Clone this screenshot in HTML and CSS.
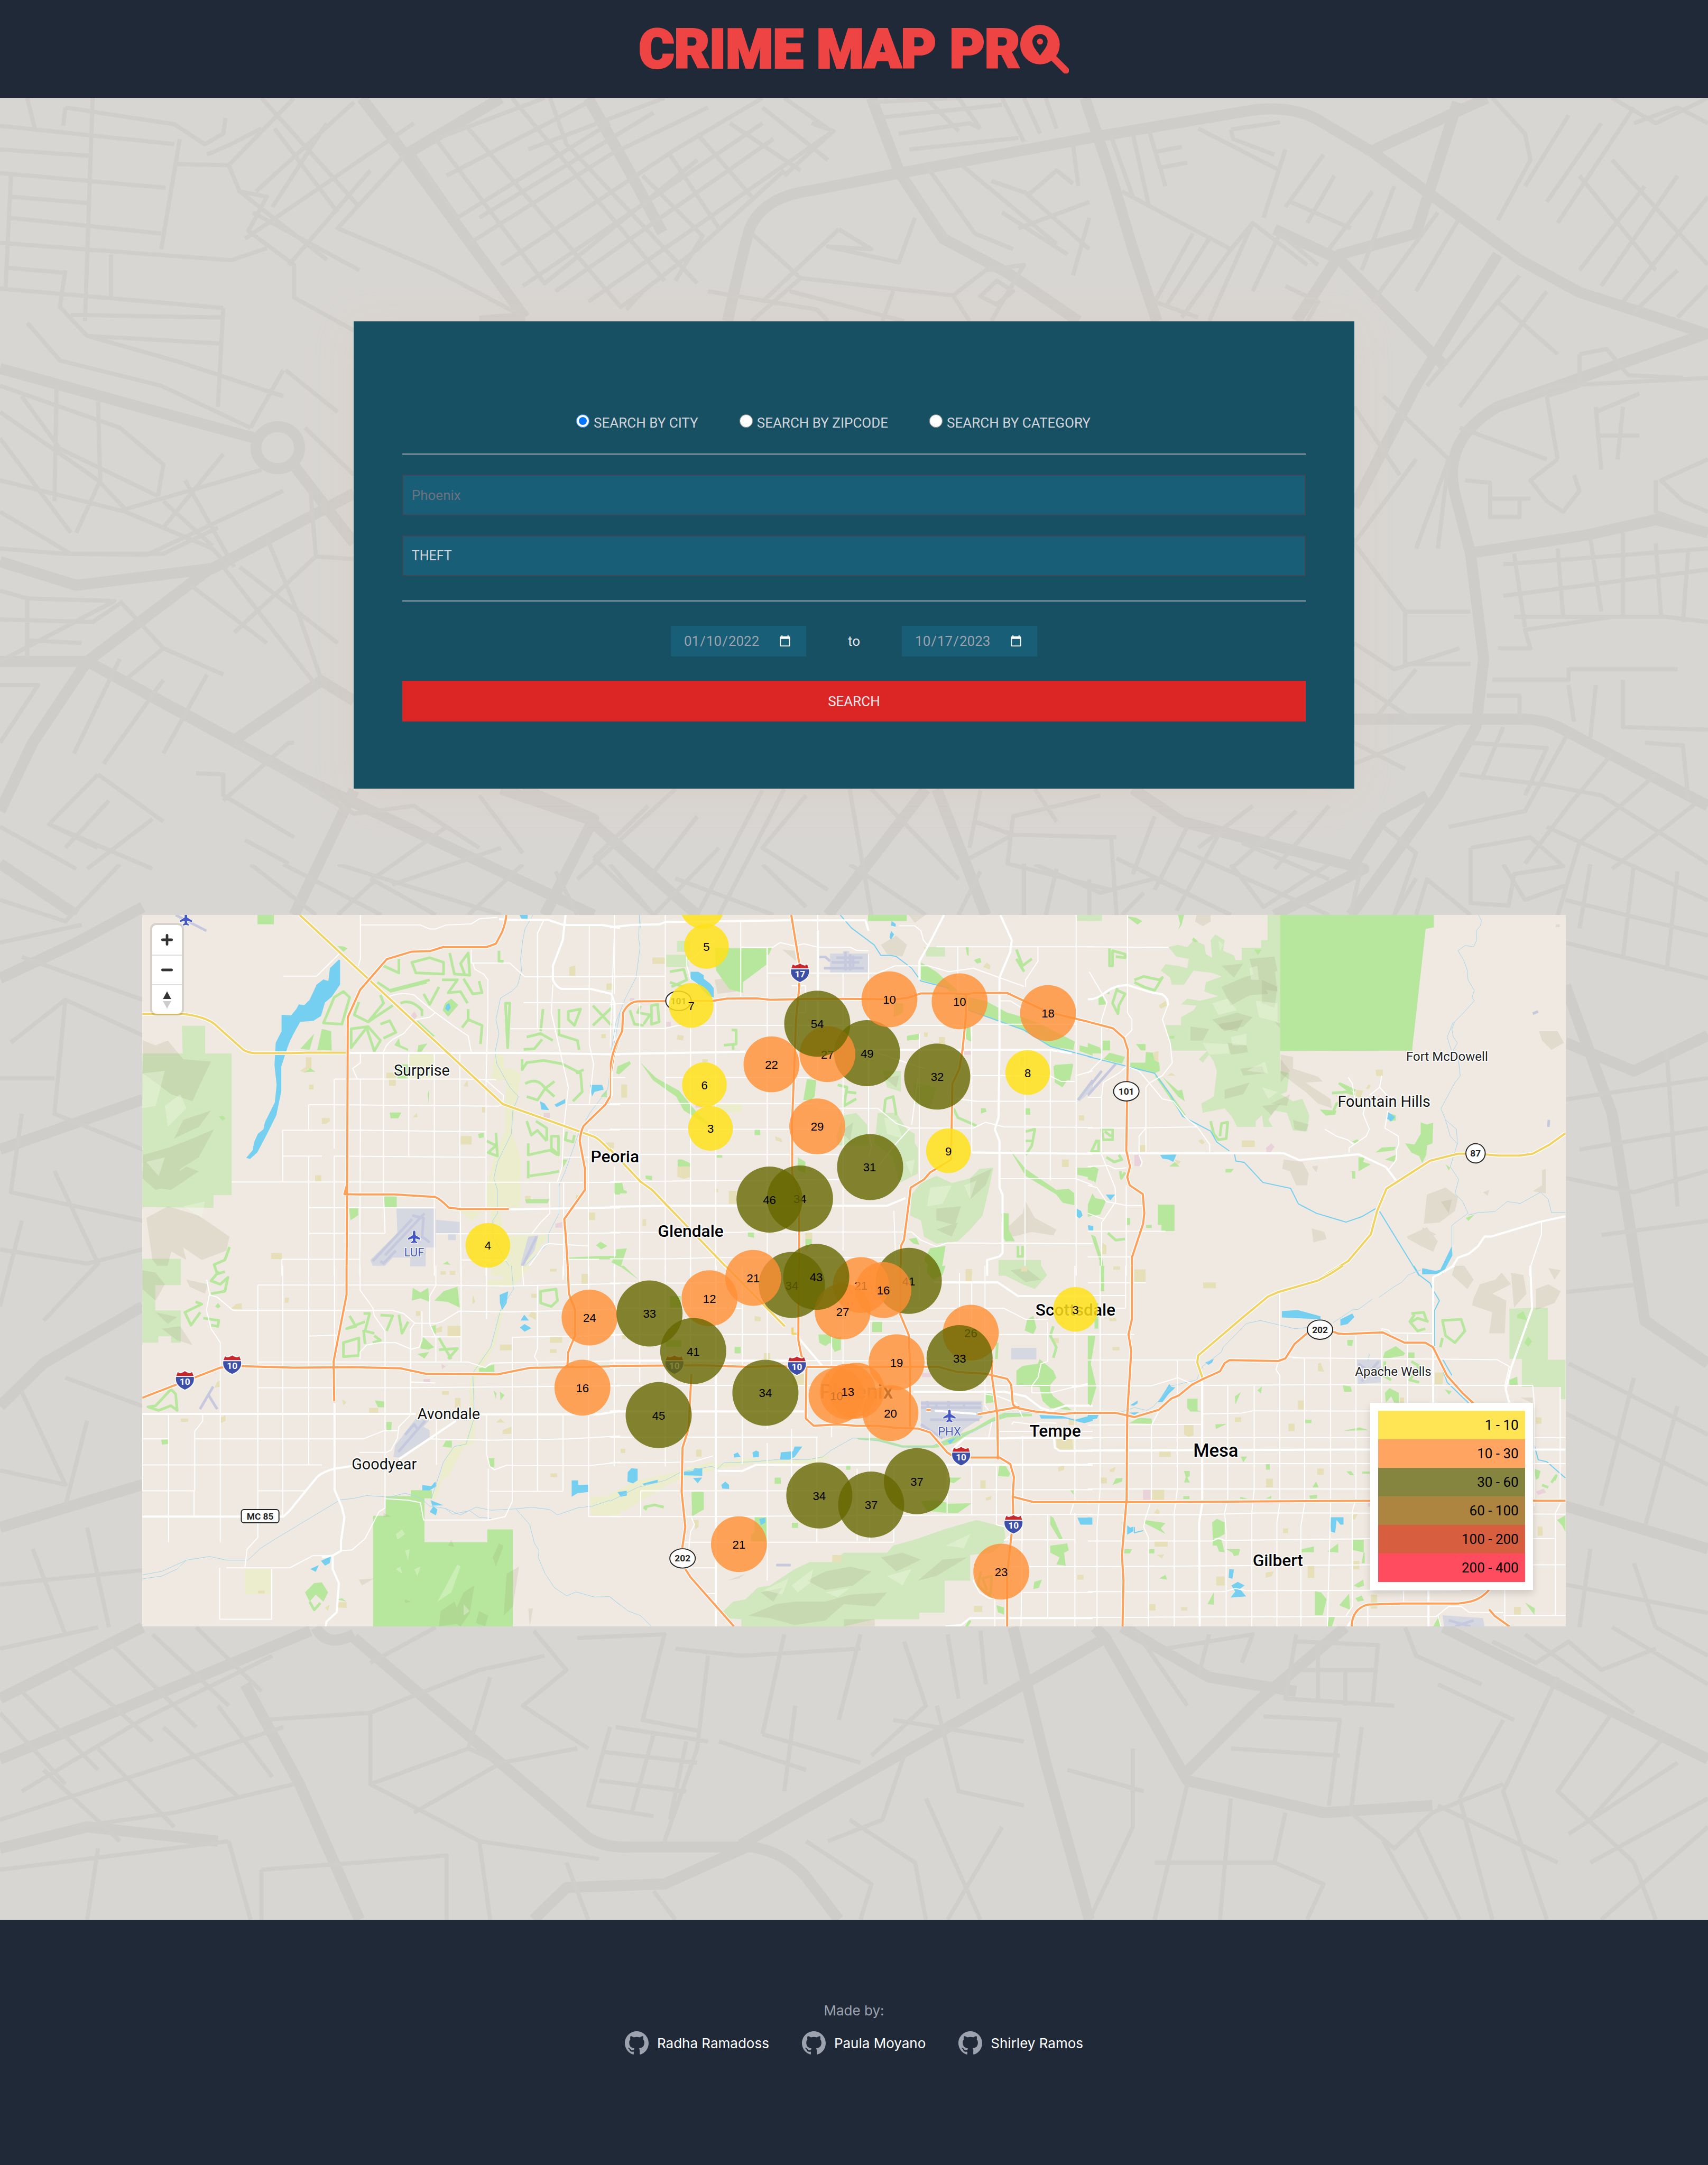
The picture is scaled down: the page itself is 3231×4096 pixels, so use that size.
FILE: index.html
```html
<!DOCTYPE html>
<html lang="en">
<head>
<meta charset="utf-8">
<title>Crime Map Pro</title>
<meta name="viewport" content="width=device-width, initial-scale=1">
<link rel="stylesheet" href="styles.css">
</head>
<body>
<header class="site-header">
  <h1 class="logo">
    <span>CRIME MAP PR</span>
    <svg class="logo-mark" viewBox="0 0 97 97" role="img" aria-label="O">
      <path d="M66 66 91 91" fill="none" stroke="currentColor" stroke-width="13" stroke-linecap="round"/>
      <path fill="currentColor" fill-rule="evenodd" d="M40 1a39 39 0 1 1 0 78a39 39 0 0 1 0-78zM40 19C31 19 25 26 25 34C25 44 34 53 40 62C46 53 55 44 55 34C55 26 49 19 40 19z"/>
      <circle cx="40" cy="34" r="6" fill="currentColor"/>
    </svg>
  </h1>
</header>

<main class="content">
  <svg class="backdrop" viewBox="0 0 3360 3585" preserveAspectRatio="none" aria-hidden="true">
    <svg x="0" y="-12" width="3360" height="1620" viewBox="0 0 1568 1568" preserveAspectRatio="none">
      <path class="ln avenue" d="M332 12 372 120 482 430M372 120 460 12M482 430 440 437M800 12 826 155 866 280 925 345 990 437M668 437Q680 320 688 262Q700 200 745 188L826 155 1000 88 1150 35Q1190 25 1215 60L1260 115 1395 320 1450 382 1568 462M1260 112 1365 12M996 12 1020 160 1040 300 1062 437M1338 20 1300 270 1230 310 1190 437M1170 262 1230 320 1325 520M0 527 110 590 238 662M1375 310 1300 560 1243 790M1568 460 1375 600Q1325 660 1335 760L1350 880 1362 1080 1355 1210 1320 1340 1240 1568M1345 880 1455 845 1520 815 1568 840M0 895 70 940 195 908 325 765M270 712 325 860M195 905 80 1085 215 1235 295 1122 325 1160M0 1085H80L30 1240 0 1370M80 1085 270 1300 545 1568M325 1330 270 1568M460 1328 540 1385 640 1568M1243 1195H1400Q1420 1195 1440 1220L1568 1360M850 1328 760 1568M860 1328 905 1568M1040 1328 1085 1390 1252 1480 1170 1568M0 1470 70 1568M480 1328 545 1385 500 1568M1310 1340 1270 1385 1240 1480M540 12 580 160 608 268"/>
      <ellipse class="ln avenue" cx="255" cy="678" rx="20" ry="40"/>
      <path class="ln lane" d="M25 12 32 70M85 12 78 437M0 65 160 100M0 110 82 122M0 155 152 183M10 200 80 212M8 240 148 270M0 288 212 321 245 298M5 335 60 345M0 375 205 412M165 90 148 300M10 160 5 380M102 310V392M60 30 160 62 188 100 205 80 207 50M160 138 210 140 220 190 245 200 228 265 270 330V392L325 455M60 30 58 65M190 120 212 100 240 70M240 12 300 150 330 220M270 12 210 140M325 20 235 190M300 60 250 220M380 60 225 280M220 190 300 320M340 150 265 330M372 120 310 260 400 340 482 430M252 70 310 230M232 230 330 340M60 340 55 410 80 465 165 515M65 425 203 430M80 465 205 480M25 440 55 512 148 560 230 640M205 412 200 600M165 515 260 580M0 560 110 640 150 710 145 770M0 610 90 740 115 795M0 660 65 840M52 560 50 780M90 590 92 740 70 840M20 580 55 680 145 770M115 795 240 720M0 740 115 800 195 870 210 905M150 780 195 865M0 800 65 880M65 880 150 880 200 830M0 870 60 880 135 882 260 760M170 740 215 905M205 690 150 830M260 530 230 640M262 530 310 610M280 640 325 730M0 950 25 965 105 970 0 1085M25 965V1080M0 1005 85 1010 110 975M25 1045 75 1050M0 1130H35L0 1240M110 970 150 1060 205 1110M150 1060 115 1120M175 940 245 1050M205 905 290 1130M245 850 275 1000 295 1120M285 760 290 885 325 890M290 885 215 1030M220 905 310 1050M110 1080 68 1260M150 1120 95 1280M190 1110 150 1260M90 1300 45 1395 90 1440M45 1395 140 1480M90 1300 150 1390M180 1298 205 1300V1340L270 1420M215 1240 320 1370M225 1425 265 1470M100 1350 60 1440M0 1400 70 1480M140 1385 80 1480M270 1240 265 1240 205 1350M290 1330 325 1375 380 1360 440 1440M345 1495 410 1400M360 1510 460 1440M310 1568 345 1500M440 1340 480 1450M595 1360 545 1460M545 1460 600 1568M640 1380 595 1500M700 1330 640 1568M720 1328 660 1568M740 1340 700 1440 760 1520M780 1328 800 1568M800 1328 880 1500"/>
      <path class="ln lane" d="M400 90 500 365 640 130M380 120 420 240 560 60M430 70 570 410 590 380M470 12 610 360M505 12 520 100 640 365M485 110 610 12M400 90 500 12M410 160 540 20M440 240 600 40M430 290 560 120 650 30M460 330 620 110 700 12M480 370 700 60M510 380 710 90M540 400 765 75M575 415 590 380 640 300 720 150M590 160 645 275 620 360M615 120 660 260M640 80 690 200M670 60 735 150M700 30 760 130M745 60 765 75 720 160M720 12 760 70M800 20 880 12M805 50 920 25M825 80 890 60 900 70M835 110 935 88M850 12 880 75M880 12 900 70M920 12 940 95M940 12 955 80M960 12 970 70M830 160 870 280M850 140 895 270 930 300M880 135 970 290M910 170 945 195 970 150 985 175M985 100 990 180M920 230 980 310M940 190 1000 300M935 260 1000 210M1000 240 985 350M770 262 800 300 760 295 825 325 840 240M770 262 700 400M735 355 875 388 890 437M735 355 690 437M650 380 750 415 760 437M725 380 830 437M820 380 810 437M875 388 905 340 940 330 910 437M690 270 735 355M900 390 915 360 930 380 915 405ZM1030 190 1130 300 1150 250 1200 330M1095 270 1060 400M1110 280 1070 410M1130 300 1085 430M1150 250 1110 437M1185 210 1240 260M1150 380 1175 270 1210 330M1060 400 1100 430M1180 370 1210 400 1200 437M1020 85 1040 200M1040 80 1055 220M1055 75 1070 180M1060 115 1085 105M1065 145 1090 135M1100 70 1175 150M1130 72 1175 58M1130 72 1132 90 1170 120M1180 110 1160 240M1215 120 1180 220M1225 160 1200 250M1260 190 1220 300M1280 180 1250 340M1320 230 1260 400M1340 240 1300 380M1370 12 1400 80 1405 130 1375 245M1440 45 1400 180M1470 60 1420 210M1500 30 1430 250M1480 12 1520 60 1568 12M1500 60 1540 30 1568 60M1450 160 1520 340M1480 130 1568 330M1510 180 1450 340M1540 160 1470 370M1568 200 1490 400M1540 340 1500 420M1568 370 1540 430M1395 350 1310 560M1420 380 1340 600M1375 400 1430 500M1450 500 1475 490 1495 540 1545 545M1450 500V560L1420 580M1370 600 1430 560 1568 545M1420 580 1430 700M1465 600 1470 720M1465 610 1505 575M1465 655 1505 655M1490 600 1485 700M1340 640 1420 700M1345 740 1368 745V810H1395V775M1368 775H1405M1430 700 1405 740 1420 780 1435 800 1450 760 1445 730M1568 700 1525 740 1545 780 1568 800M1520 740V800L1560 830M1270 580 1330 700 1300 870M1243 600 1285 730M1300 700 1243 860M1330 700 1320 870M1243 860 1290 990 1350 990M1290 990 1290 1090 1350 1090M1380 900 1568 870M1380 960 1568 910M1390 1000 1530 1000 1568 1010M1375 1060 1405 1060 1400 1025 1480 1000M1390 880 1400 1020M1430 870 1435 1000M1460 850 1470 990M1490 840 1490 1000M1520 860 1525 1000M1550 870 1545 1010M1370 1120H1440V1100H1540M1365 1150H1395V1195M1440 1130 1445 1200M1465 1130 1460 1230M1490 1120 1490 1210 1568 1215M1510 1240 1545 1245 1550 1350M1243 1050 1280 1100 1340 1060M1243 1120 1300 1200M1300 1100 1260 1200M1243 1280 1340 1200M1243 1240 1290 1290M1350 1240 1420 1250 1400 1340M1380 1210 1360 1310M1340 1300 1420 1320 1470 1340M1440 1220 1400 1370 1330 1400M1480 1260 1440 1360 1400 1470M1520 1300 1450 1430 1430 1568M1560 1350 1480 1480M1470 1340 1568 1470M1420 1400 1568 1540M1350 1440 1405 1420 1435 1475 1390 1490 1385 1550 1350 1545V1440M1270 1400 1300 1450 1280 1568M1300 1568 1310 1500 1350 1568M895 1390 930 1415 1025 1420M930 1415 890 1460M1010 1340 930 1380 925 1470 1020 1520M940 1470V1568M970 1480 960 1568M1000 1500V1568M1020 1420 1025 1568M1025 1460 1130 1568M1060 1380 1040 1490M1090 1400 1060 1520M1120 1410 1080 1560M1150 1360 1100 1440M1190 1370 1130 1480M1220 1360 1170 1480M1140 1430 1220 1500M1080 1440 1220 1568M900 1330 890 1440M950 1328 970 1390M620 1328 530 1500M660 1440 600 1568"/>
    </svg>
    <svg x="0" y="1508" width="3360" height="2200" viewBox="0 0 1568 1568" preserveAspectRatio="none">
      <path class="ln avenue" d="M290 1070Q300 1100 325 1080M285 1075 0 1255M325 1085 540 1365Q555 1380 580 1378H690Q720 1385 740 1420L770 1480M680 1375 1015 1085 1005 1070M1015 1085 1090 1285 1215 1330 1315 1320M930 1070 960 1260 1000 1480M1235 1070 1150 1180 1085 1280M1325 1070 1568 1255M225 1150 275 1290 330 1480M0 1170 131 1070M1030 1070 1110 1140 1190 1160M690 1375 610 1430 520 1435 490 1480M0 1380 80 1350 200 1370M1437 250 1500 290 1568 240M1437 170 1480 350 1510 640 1568 700M1437 900 1568 960M0 160 70 110 131 60M0 400 131 330M131 620 40 700 0 760M0 930 131 870"/>
      <path class="ln lane" d="M0 50 60 80 110 0M0 110 75 85M20 130 131 190M10 250 60 190 131 240M60 190 50 350 131 400M0 300 50 300M20 350 10 460 131 500M50 430 90 560 40 640M0 540 80 560 131 540M20 500 0 620M60 720 131 760M20 740 60 870 0 850M80 780 60 900M0 1010 131 990M30 960 60 1080M80 930 100 1070M0 1100 90 1070M20 1160 90 1270M60 1120 140 1230M100 1090 180 1210M140 1080 210 1180M180 1070 240 1160M0 1190 60 1290M40 1270 110 1370M90 1240 160 1350M150 1210 220 1310M200 1180 250 1280M20 1300 130 1200 250 1110M0 1340 140 1270 260 1210M70 1350 160 1330 270 1290M0 1410 210 1370M90 1380 80 1480M210 1370 230 1480M240 1200 340 1190V1290L440 1370 550 1395M340 1120 400 1070M340 1190 440 1130 500 1110M340 1290 430 1240M380 1330 460 1260M450 1140 430 1240 460 1260 530 1240M530 1085 610 1080 590 1200 640 1215M490 1075 520 1130 480 1180 540 1240M560 1210 540 1320 600 1335M565 1210 650 1230M555 1245 640 1260M550 1285 630 1300M600 1220 580 1330M630 1230 615 1340M650 1110 640 1240 610 1370M620 1100 680 1110 790 1100M720 1080 700 1220M790 1080 770 1200M660 1230 740 1270M700 1220 790 1260M730 1180 720 1300M830 1090 850 1180 800 1250M870 1080 880 1170M900 1075 905 1150M820 1200 940 1230M860 1180 880 1300 940 1320M830 1250 810 1340 760 1370M1040 1070 1090 1180M1070 1100 1150 1080 1140 1120M1110 1080 1100 1140M1190 1080 1180 1170 1280 1180M1190 1090 1265 1095 1260 1180M1210 1090V1170M1235 1130V1180M1195 1130H1265M1290 1070 1300 1110 1360 1150M1160 1195 1230 1200 1220 1320M1130 1240 1230 1250M1250 1210 1240 1330M1040 1240 1040 1350 1000 1480M980 1270 1050 1300M1090 1290 1060 1480M1130 1310 1120 1480M1180 1330 1170 1400 1215 1430 1200 1480M1060 1400 1170 1400M1240 1330 1280 1380 1315 1330 1380 1290M1270 1370 1310 1480M1300 1350 1340 1480M1340 1310 1370 1480M1320 1320 1430 1400M1380 1200 1340 1310M1430 1140 1380 1300 1420 1480M1480 1190 1430 1300 1500 1400M1530 1220 1460 1340M1440 1360 1540 1260M1460 1400 1568 1310M1470 1480 1568 1350M1500 1400 1520 1480M1370 1090 1410 1120 1440 1090 1470 1130 1520 1100M1400 1080 1500 1190M1480 1070 1568 1150M1520 1070 1568 1110M1320 1150 1390 1200M1437 50 1568 100M1437 110 1568 160M1460 0 1450 90M1500 0 1490 130M1540 10 1530 150M1437 330 1568 300M1450 400 1568 370M1437 440 1500 460 1568 430M1470 520 1568 500M1530 260 1540 480M1437 600 1500 590M1440 700 1568 800M1437 770 1568 870M1500 720 1470 900M1540 760 1510 930M1460 960 1450 1070M1500 980 1520 1070M1437 1010 1568 1050M230 0 290 71M260 0 350 71M340 20 400 71M310 0 460 71M480 0 430 71M510 10 530 71M560 0 600 71M620 20 710 71M700 0 740 60M780 0 850 71M900 10 880 71M950 0 1010 40 1060 20 1130 71M1050 40 1030 71M1130 0 1160 60 1220 0M1250 0 1240 71M1300 20 1280 71M1380 0 1400 50 1437 30M240 1410V1480M330 1400 410 1390 410 1480M240 1410 330 1400M440 1370 450 1480M520 1400 540 1480M600 1440 620 1480M780 1340 840 1400 850 1480M740 1370 800 1430 790 1480M850 1310 900 1480M920 1350 870 1480"/>
    </svg>
  </svg>

  <form class="search-card" action="#">
    <div class="mode-row">
      <label class="mode"><input type="radio" name="mode" checked><span>SEARCH BY CITY</span></label>
      <label class="mode"><input type="radio" name="mode"><span>SEARCH BY ZIPCODE</span></label>
      <label class="mode"><input type="radio" name="mode"><span>SEARCH BY CATEGORY</span></label>
    </div>
    <div class="field-group">
      <input class="field" type="text" placeholder="Phoenix" aria-label="City">
      <select class="field" aria-label="Category"><option>THEFT</option></select>
    </div>
    <div class="date-row">
      <input class="date" id="from" type="date" value="2022-01-10" aria-label="From date">
      <label for="until">to</label>
      <input class="date" id="until" type="date" value="2023-10-17" aria-label="To date">
    </div>
    <button class="search-button" type="submit">SEARCH</button>
  </form>

  <section class="map" aria-label="Crime map">
    <svg class="map-art" viewBox="0 0 2800 1400">
      <!-- north west -->
      <svg x="-10" y="-10" width="950" height="720" viewBox="0 0 1568 1568" preserveAspectRatio="none">
        <path class="hill" d="M145 497H221V615H307V1222H248V1277L17 1273V615H148ZM17 1495H142V1568H17z"/>
        <path class="shade" d="M20 560 60 580 100 560 150 640 240 650 200 760 180 820 110 790 60 740 17 700zM90 650 170 730 180 800 90 770zM20 1050 100 1020 180 980 250 940 200 1060 140 1110 120 1180 60 1200 17 1150zM150 900 240 860 200 930 120 980zM30 1320 100 1270 200 1310 300 1400 290 1460 210 1500 120 1420 90 1568 50 1500zM60 1380 140 1400 160 1500 80 1440zM60 1190 160 1100 200 1120 110 1200z"/>
        <path class="glow" d="M20 700 90 690 60 840 17 850zM90 840 140 790 160 850 100 930zM30 1080 90 1060 70 1140zM150 1270 220 1250 210 1320z"/>
        <path class="wash" d="M1160 620H1190V680H1215L1245 700 1230 850 1215 950 1245 1060V1275H1175L1215 1568H1150V1290L1135 1280V1180L1160 1060 1195 950V850L1200 730 1150 728ZM1195 1395H1335L1240 1568H1195ZM882 617H965V725H882ZM1050 1290H1120L1085 1335z"/>
        <path class="sand" d="M548 632h18v50h-12l-8 17-17-10 19-15zM810 697h30v57h-22v-27h-10zM558 749h15v20h-15zM600 892h25v15l-12 10h-13zM1050 969h36v36h-36zM578 1137h20v28h-20zM435 1470h35v26h-35zM1403 245l20-7v45h-20zM1524 315h22v28h-22zM1060 755l12-25 3 28zM895 890l13-20 3 18zM1120 845h10v23h-10zM1467 1297h20v32h-20zM1340 1538h22v12h-22zM1507 532h15v18h-15zM985 1548h17v15h-17zM1260 1226h18v18h-18zM1522 997h26v25h-26zM1424 1222h12v20h-12z"/>
        <path class="pink" d="M888 455 900 435 910 455 900 470zM1320 870h20v22h-20zM1358 1345l22-8v25h-22z"/>
        <path class="park" d="M391 22h53v40h-53zM650 155l20 25 13-15-12-8zM530 595 575 530 560 600zM585 600 600 510 630 520 632 602zM1000 400 1020 380 1043 408 1010 458 992 430zM802 1228h41v46h-41zM688 1278h30v30l-25 22zM820 868h38l-10 25h-25zM845 662h35v62h-35zM1550 1175h18v45h-18zM1383 1070h15l-15 35zM1260 1240h78l-5 17h-70zM1490 1437l15-15 22 18-20 15zM1400 1490l100-7h68v14h-168zM545 695l17-17 17 15zM265 885l15-3 7 12-10 10zM948 770l-5 20 4 40zM912 475l55 65-10 5-55-60zM835 580l15-30 5 30 25 15v10zM910 610l3-30 30-8-20 35zM992 1518l15-12 10 15zM1505 800l20-30v33zM1107 960l18-5v20l-15 3z"/>
        <path class="ln golf" d="M892 225 950 205 995 225V275L905 270ZM1015 185 1030 275 1080 280 1075 185 1050 230 1065 280M800 240 850 270V210M780 310 820 345 950 300M820 350 940 310M640 375 670 350 690 375 665 490 605 485ZM720 395 705 450 750 480 800 400 790 365M750 480 830 410M695 510V590L745 505 770 605 790 560 750 500ZM790 490 820 475 840 525 800 550M855 400Q890 380 925 430V455M990 300H1040L1010 355 1050 350 1073 400M1060 295 1090 360 1120 355 1110 305M930 360 950 405 980 330M1075 425V470L1120 495 1115 575M1075 470 1055 505M1196 400H1210L1203 590ZM1265 545 1310 530 1350 560M1318 425 1310 520M1370 425V535L1430 560 1435 600M1255 598 1290 595 1315 555M1400 435 1440 425 1420 495 1400 470ZM1480 410 1540 495M1540 420 1480 495M1250 640V685L1265 655 1320 645 1380 660 1440 700 1445 780 1415 820M1450 685 1425 700M1260 745Q1300 715 1325 765L1355 735M1325 765 1355 800M1325 765 1300 815 1265 800M1265 905 1280 965 1300 945 1330 990M1295 905 1330 935V990M1345 970H1368V1050L1345 1020ZM1270 1000V1050L1340 1030 1365 1050M1270 1075V1150M1275 1140 1330 1130 1370 1120M1395 950 1390 985 1415 995 1420 965M1165 955 1170 1055 1140 1040 1165 1010 1135 990M300 1445 285 1500 250 1520 260 1560 285 1550M1175 175V220H1190"/>
        <path class="air" d="M842 1280H968V1447H937V1527H887V1490H830L805 1525H765L757 1500 845 1385ZM970 1328 1047 1337V1385H1035V1415H1010V1388H970ZM1270 1400 1303 1395 1290 1460 1250 1530 1245 1520z"/>
        <path class="ln runway" d="M765 1505 893 1325M805 1480 933 1300M1250 1530 1297 1400M125 22 225 90M893 1310 930 1320 925 1400 950 1425M790 1505 800 1515 840 1460"/>
        <path class="water" d="M655 213 659 215V320L632 372 610 397 597 455 572 476 530 480Q500 545 488 590L468 672V778L452 880 420 965 390 1040 367 1067 354 1063 375 1030 380 995 392 960 410 940 415 910 447 825 453 750 446 665 450 570 469 520V450L500 452 517 425 525 405 543 408 560 385 583 320 605 298 621 305 626 250ZM1242 22h26v16h-20zM1005 405l8-5 5 20-8 15-10-12zM1470 750h40l5 20-30 10-8 20zM1308 820l15 10 15 28-25-2zM1355 835l35-25v18l-28 17z"/>
        <path class="ln stream" d="M1285 22 1260 80 1252 130 1245 210 1248 260 1235 325 1215 350 1180 378 1165 470 1175 530 1162 610 1168 660 1210 760 1238 800 1220 860 1215 960 1170 1080 1158 1150 1170 1200V1300L1155 1330V1400L1195 1500 1215 1540V1568M1568 440 1555 530 1540 640 1528 770 1470 870 1430 970 1390 1120 1370 1180V1300L1335 1390V1430L1225 1568"/>
        <path class="ln street" d="M725 22V210L718 240M725 65H920L950 82H968L1003 65 1085 60 1112 38 1170 32M475 284H583L655 190M1085 170V228H1210L1258 286H1568M1090 228 1097 255 1125 275 1139 300V440L1133 730 1190 795 1187 832M1320 45 1300 100V505M1212 509H1568M1255 398H1545M1350 320 1345 440 1400 760 1385 940 1380 1100 1365 1165M1468 70V575L1482 660 1468 835M725 617V655L700 680 715 725M642 725H1050L1165 728M725 725V910L723 1568M800 617V1210L805 1385M882 617V1055M965 617V1568M1048 617V1180L1052 1568M557 835H640L1173 841 1187 832M473 944H730L1133 951M473 1055H600M640 1055 1133 1060M307 1166H680L1568 1168M640 725V1022M473 944V1164M557 835V944M557 1055V1568M640 1055V1568M557 1276H968M557 1386H805M970 1388H1280L1568 1384M470 1497H723M470 1497V1568M1133 730V1568M1385 1170V1568M1340 1170V1300L1310 1340 1280 1390M1052 1500H1200M800 610Q805 580 830 555L865 530 905 470 950 460 968 440Q920 390 900 365 860 350 820 370M968 440 1030 500 1075 540 1085 610M1400 835H1568M1465 943H1568M1385 1060H1470M1465 943V1568M1550 90V360M1550 1100V1568M1250 1568 1320 1440 1335 1430 1465 1440M1385 1497H1500"/>
        <path class="ln main" d="M1175 40 1205 43H1335L1385 65H1510L1568 78M1391 22 1382 130 1350 240V300Q1360 330 1378 339H1473L1540 360 1550 400V560M682 613H1230L1568 619M1207 1283 1568 1275"/>
        <g class="casing"><path class="ln" id="yw1" d="M528 22 705 240 1187 832 1484 972Q1500 980 1545 1045L1568 1075M17 446H150Q220 458 250 488L345 600Q360 612 380 614H500L550 612H682"/></g>
        <use class="route" href="#yw1"/>
        <g class="casing"><path class="ln" id="or1" d="M1199 22Q1196 60 1185 95L1165 145 1133 160H992L950 177 892 179 811 211 724 343 684 460 682 1175 680 1568M682 1175 673 1218 717 1219 835 1219 968 1230Q985 1240 1012 1276L1050 1282H1207M1568 540 1548 620 1538 700V795L1520 835 1450 925Q1440 950 1437 990L1454 1110V1200L1387 1325 1392 1400 1400 1568"/></g>
        <use class="freeway" href="#or1"/>
      </svg>
      <!-- north centre -->
      <svg x="920" y="-10" width="950" height="720" viewBox="0 0 1568 1568" preserveAspectRatio="none">
        <path class="hill" d="M183 192H255V245H183ZM218 133H260V180H218ZM760 880 800 870 835 920 840 1010H740L735 970ZM870 870 930 870 965 940 990 960V1000L1000 1020V1130L940 1170 920 1060 860 1000ZM885 690H945V780L900 760ZM1010 1170 1060 1140 1110 1170 1170 1150 1200 1110 1245 1105 1230 1200 1210 1310 1190 1340 1170 1370 1130 1420 1060 1430 1020 1400 1010 1330 975 1310 980 1220ZM1262 1500H1400V1568H1262ZM1517 22h51v26h-51zM985 740 1060 760 1040 850 990 830zM1020 160h68v40h-60z"/>
        <path class="shade" d="M880 150 930 110 965 150 950 200 900 190zM970 22H1025L990 55zM1340 1300 1350 1250 1380 1320 1450 1370 1440 1395 1370 1380 1310 1400 1280 1375zM1060 1280 1140 1270 1120 1350 1060 1330zM1170 1150 1240 1110 1220 1180 1170 1240zM750 950 790 910 780 990zM560 170 600 175 605 220zM340 300 390 290 410 350 350 360zM890 720 940 710 930 760zM1060 1370 1130 1340 1110 1400z"/>
        <path class="glow" d="M1040 1190 1110 1180 1080 1260 1030 1270zM1150 1180 1190 1160 1170 1240zM890 890 930 900 950 980 900 960zM960 1080 990 1070 980 1140z"/>
        <path class="wash" d="M315 832H427V868H315z"/>
        <path class="sand" d="M138 204h42v28h-42zM37 748h19v57h-19zM219 1100h41v45l-20 8-21-10zM386 1204h25v56h-25zM106 1325h12v30h-12zM536 970l20 10 5 15-22-7zM635 1380h22v55h-22zM220 535l20 5-3 20-20-5zM1212 245l12-20 12 15-3 15zM1158 1540h18v28h-18zM1468 1070h22v32h-22zM1335 630h20v35h-20zM1523 880h17v22h-17zM340 1195h12v15h-12zM1020 525h12v18h-12zM300 640h18v12h-18zM1068 545h20v32h-20z"/>
        <path class="pink" d="M183 480h15v20h-15zM1150 603h22v18h-22zM278 830h22v17h-22zM65 378h14v12h-14z"/>
        <path class="park" d="M838 22H964V48H838ZM340 163 508 165V235L432 310V355L388 340 345 260zM510 163h16l-10 30h-8zM1010 225 1060 265 1150 370 1220 390 1290 440 1330 455 1400 490 1510 565 1505 600 1430 585 1340 515 1160 430 1090 330 1010 300zM1525 580 1568 595V625L1525 605zM20 700 25 670 65 648 68 660 30 705zM100 655 150 720 225 775 290 880 325 915 315 920 240 860 215 800 140 730zM640 725 670 730 665 800 655 815H628zM15 1170h25l5 30 10 5v10h-40zM220 1070h15l25 15v15h-40zM115 1138l22 2v18l-20-5zM20 1455l35-5-20 80-30-20 15-30zM1297 1025 1350 1110 1450 1200 1490 1195 1508 1215V1265L1470 1255 1450 1220 1350 1140zM1518 1105h50v60l-15-20-35-10zM965 540l40-10v25l-40 5zM1350 850h15v28h-17zM448 1380h20v25l-20-5zM470 940h18v25h-18zM347 1050h18v12h-18zM1440 670l60-10v40l-30 60-25-20zM970 1410l25-5 10 30-20-5zM1270 1300h25v70l20 50h-30l-10-20zM1155 160h10v38l-5-5zM1040 1450l50-10-10 80-20 48-40-68zM1182 215l20-10 5 20-15 5zM922 400h30v40l-30 20zM1205 850h15l3 15-18 8zM1150 505h20l3 60-15-10zM610 1060l25 20v50l-25-15zM635 1410h20v20l-20 30z"/>
        <path class="ln golf" d="M195 265 240 255 250 300 200 330M195 310 240 330M395 515H410V575L370 580M400 580V600M65 430 80 490 110 495M100 410 90 440 130 450 110 490M135 410 155 405 160 480 135 490ZM740 750 770 760 760 840 800 810M770 780 800 785M895 810 920 800 930 880M895 810 890 870M1320 170 1340 240 1370 210M1320 210 1345 265M1350 950 1380 940 1370 1010 1350 1050M1350 990H1375M1445 670 1500 665 1490 730M1115 850 1130 890 1190 925M1280 1300 1290 1420M1325 1440V1485H1340V1440"/>
        <path class="air" d="M715 187H757V177H777V187H838V268H715zM1568 725V770L1525 820 1520 810 1540 780z"/>
        <path class="ln runway" d="M695 250H825M720 225H810M735 205H820M765 180V260M780 190V260M790 195V250M680 202H700L715 220M1568 730 1520 815"/>
        <path class="water" d="M915 47l13 13v12l-15-5zM913 90l10 15-10 22-5-10zM262 265h25l18 15v15l20 20 12 20v40l-15-5-20-25-18-30-22-20zM1515 1280l15 10 5 20-10 12-10-10zM1553 1350l15 5v18l-10-5z"/>
        <path class="ln canal" d="M748 22 785 78 858 150 880 195H913L930 200 980 250 1010 305 1100 335M1165 430 1345 515 1430 585 1568 632"/>
        <path class="ln stream" d="M97 22 93 120 98 160 85 290 50 380 20 480 5 600M95 22 101 80"/>
        <path class="ln street" d="M97 285V1568M180 22V1568M262 390V1568M344 390V1568M425 50V380M511 160V1568M675 22V700M757 270V1460M840 190V600M840 740V960M922 1290 930 1568M1005 530V1160M1130 160V360M1175 480V1040M1348 600V1568M1430 600V1160M1514 22V1568M0 285H180M0 405 45 400M0 508H180L220 495H1150M180 718H650M0 718H50M0 830H675M680 850H870L930 915 975 935H1180L1220 910 1280 930 1568 932M0 940H675M0 1048H750M0 1165 750 1155M0 1382H430M430 1380H980L1010 1415 1060 1443 1095 1427 1568 1430M0 1495H200L340 1490H900M510 271H870L925 240H1035L1100 265 1180 250 1265 290 1345 328M1060 158H1568M425 160H530L553 140 600 155 630 145 675 160H780L800 173 840 175M1175 490H1514M1175 710H1350L1430 712 1465 735H1510M1120 808 1190 820H1514M1265 1152H1514L1568 1180M940 68H990L1010 90 1018 130 1035 155M15 22V90L0 590M250 190V240L262 300M255 220 340 130M1390 160V220L1350 300V330M1265 390H1300L1350 430M840 960 850 1010 840 1060M975 935 930 1000 870 1100M980 920 1000 720M590 325H635V440H590M1514 710 1568 690M840 600 930 640 1020 680"/>
        <path class="ln main" d="M0 75 70 65 160 62 180 52 570 45H830L840 90M1085 22 1035 150 1005 220V300M1268 22 1305 130 1300 180 1265 290V600M1265 600 1262 890 1250 940 1265 990V1190L1275 1220V1470L1265 1485 1225 1500V1568M0 618 440 608M790 600H1430L1500 615M0 1272 180 1268H900L960 1235M1175 1040 1568 1045M840 600V740M675 90V500"/>
        <g class="casing"><path class="ln" id="yw2" d="M0 1025 100 1165 137 1200 385 1540 405 1568"/></g>
        <use class="route" href="#yw2"/>
        <g class="casing"><path class="ln" id="or2" d="M0 800V690Q5 620 25 560L40 520 43 440Q60 395 90 392L335 390 380 380 475 379 520 385 680 381 930 383 970 376 1010 358H1120L1160 362 1180 356H1290L1420 437 1568 484M589 22 615 230V330L605 460 592 900V1130L615 1220V1568M1158 362 1155 470 1145 600 1135 680 1112 745 1108 1070 1040 1125 1020 1155 977 1190 955 1415 945 1440V1568"/></g>
        <use class="freeway" href="#or2"/>
      </svg>
      <!-- north east -->
      <svg x="1860" y="-10" width="960" height="720" viewBox="0 0 1568 1568" preserveAspectRatio="none">
        <path class="hill" d="M578 22H618V690L648 700 640 780 620 790 660 820 690 810 712 880 705 950 660 945 640 870 600 860 580 900 595 930H565L560 880 540 905V930H480L465 890 440 850 370 870 365 830 405 800 415 690 405 650 390 620 370 655 357 640 385 603H272L250 494H300V460L340 430 350 410 300 405 320 380 360 390 420 370 375 350 380 310 430 285 400 270 340 260 310 320H270L265 290 235 260 250 233 290 240 320 250 325 210 285 200 260 160 290 150 320 160 340 130 375 150 380 190 400 205 395 130 410 105 440 130 435 175 470 195 475 215H495V162H557V130H578ZM0 22h46v26H0z"/>
        <path class="shade" d="M350 22H395V50L370 70 345 50zM430 330 500 290 600 250 610 350 560 340 500 380 460 410zM400 470 480 440 530 460 500 500 440 520zM520 210 600 200 610 260 540 310zM330 500 390 510 370 560 330 560zM450 570 510 580 515 610 460 620zM620 620 660 630 660 680 740 715 755 735 700 740 780 810 785 850 740 830 700 780 620 700zM590 830 650 790 640 840zM490 680 560 670 570 700 500 710zM440 770 520 740 500 790 440 810zM625 330 665 330 675 400 655 415 620 380zM1035 100 1055 110 1050 135 1035 125zM1012 190 1040 240 1043 285zM600 480 680 515 620 510zM630 1070 690 1080 710 1130 705 1180 670 1180 650 1120 625 1110zM720 1100 740 1095 735 1125zM720 1365 760 1380 768 1410 725 1425zM1090 1220 1150 1190 1190 1230 1180 1290 1130 1340 1080 1345zM1025 1400 1090 1360 1125 1420 1110 1465 1070 1440 1030 1410zM1075 1360 1120 1390 1080 1410zM1450 520 1510 520 1530 570 1490 600 1460 560zM1270 1210 1290 1200 1285 1225zM1460 1115 1472 1110V1215L1430 1205 1460 1180zM1505 62h12v12h-14zM500 300 560 310 580 360 480 370zM660 900 710 920 700 950 665 940z"/>
        <path class="shade" d="M560 300 610 330 600 420 560 400zM420 490 500 470 480 520 430 510zM430 240 500 230 470 290zM620 640 650 690 620 740zM560 840 620 830 590 880zM1135 1250 1170 1240 1160 1300z"/>
        <path class="glow" d="M520 250 545 240 550 300 525 300zM460 545 510 530V580H465zM370 570 450 575 455 615 390 620zM510 690 570 650 580 700zM400 400 450 380 480 430 420 450zM420 130 435 150 425 180zM540 390 610 400V480L550 460zM560 760 610 780 580 810z"/>
        <path class="sand" d="M925 684h23v28h-20zM228 410l22-20 5 20-20 13zM213 610l14-5v55h-15zM255 710l15-12 12 13zM495 988h42v28h-42zM355 990l12-8 10 15-10 8zM863 770l22 5-8 28-15-5zM893 765l10-17 7 5-7 15zM280 1070l20 8-12 15zM47 1427l13 10v38h-15zM82 1528h22v14h-22zM150 1541h36v27h-36zM168 1008h18v28h-18z"/>
        <path class="pink" d="M573 1020 590 1000 600 1015 587 1040H575zM150 1050h14l10 40-10 8h-14z"/>
        <path class="park" d="M618 22H1112V75L1086 82 1042 603 618 605ZM535 170h24l-12 24zM335 130l5-12 15 18-10 3zM290 22h20l-8 40-10 22 5-25zM125 28l30 5 20 15-15 15zM0 570 40 590 45 615H0zM48 560h24v42h-24zM155 575h31v27h-15zM70 612 120 630 110 660 50 640zM137 655H185L187 610 210 612 215 645 230 655 232 690 215 700 137 680zM240 715 290 775 303 770 312 820 290 800zM215 710 230 720 315 878 305 885zM35 370l10-5 15 40-25 3zM70 350v10h-10zM1070 910 1090 920 1110 912 1108 1000 1090 1010 1088 1050 1075 1085 1065 1055 1040 1040 1020 1000 1050 1005 1070 960zM225 1263H279V1376H237V1350H225ZM188 1350h18v13h-18zM126 1320h10v30h-10zM443 1110h27l-10 15h-17zM850 993l15-10 10 8-15 10zM925 1040 945 1018 990 1015 985 1030 955 1035zM955 1070 990 1050 985 1080zM870 1060 890 1060 885 1080 910 1090 870 1120zM842 1120h18v33l-10-3v-28zM1150 1090l15 15-5 12zM1215 1320l28-15-20 28zM262 540h18l-3 12h-12zM745 855l55 5-5 18-30 3zM965 870l25 10v22l-20 5zM262 1100l18-20 15 20zM0 1110l20-10 15 10-10 60-8-10-17-5zM15 1215l10 20 35 10-20 60-40 10v-50zM10 1390l15 10 25 110v58h-12v-65z"/>
        <path class="ln golf" d="M70 165V240H80V175L120 190V205L90 200M150 300 180 285 230 300 240 290 215 345 180 330 150 310M95 335 80 400 97 445 100 410 120 360 95 345M395 905 405 960 420 985 445 980 450 910 430 915 425 970M45 940H80V985H50ZM55 950 75 970M30 985 12 1035H35V985M785 785 830 780 855 790 810 745 860 775M790 860 800 830 830 820M60 1060 85 1080 110 1070 100 1050M105 1120 108 1150 120 1125M65 1385 90 1415 120 1410"/>
        <path class="ln runway" d="M90 660 0 795M45 690 10 750M1430 445 1447 435M1482 900 1480 930"/>
        <path class="water" d="M966 867 988 888 975 906 962 895zM233 1050 285 1048 275 1080 260 1070 240 1065zM58 1220h30l-15 25zM0 1353l18 2v18h-15zM1075 1535 1130 1550 1170 1440 1172 1480 1140 1560H1075z"/>
        <path class="ln canal" d="M0 628 215 700 265 790 305 885 395 948 415 995 455 1033M472 1048 476 1076 503 1082 563 1168 652 1193 677 1260 735 1300 830 1338 880 1315 925 1280M938 1292 1065 1568"/>
        <path class="ln stream" d="M1256 22 1265 45 1262 68 1248 90 1250 130 1240 158 1212 153 1190 175 1208 215 1220 260 1222 300 1242 345 1235 375 1242 390 1205 445 1180 478 1170 510 1175 545 1188 570 1175 600 1192 650 1197 712 1180 740 1135 852 1150 900 1185 940 1188 1000 1165 1100 1192 1155 1180 1215 1205 1250 1222 1300 1170 1352V1440M1175 480 1155 545 1168 600M1150 900 1165 970 1190 1005M1222 1308 1255 1297 1308 1293 1348 1250 1390 1258 1455 1210 1480 1240 1490 1297H1535"/>
        <path class="ln street" d="M128 22V440L142 470V515L120 545M0 158 260 161M5 265 62 395 45 470V640L0 700M45 800V1050L88 1190 90 1250 45 1340V1568M0 803H45M45 800 50 740 100 700 125 670 165 690 200 745 240 810 275 820 315 890 352 930 392 1005V1040M187 1040V760L200 740 240 710 272 655 265 570 240 470 260 400M0 935H125L352 930M165 1045V970L187 935M0 1100 65 1095 90 1110 125 1105M165 1050 175 1080 170 1100M837 717 850 745 862 845M945 710 938 760 905 795M938 760 965 800V850M890 845 885 875 905 940 895 970 840 1020V1040M762 940 800 970 835 985 855 1005M965 860 955 935 998 970 1000 1000 992 1030V1070L968 1112M0 1180 30 1190 60 1250 125 1267H175M0 1377H250M0 1487H140M124 1568V1180M0 1300 50 1325M1458 1335V1390L1420 1540V1568"/>
        <path class="ln main" d="M0 383Q30 385 55 355 90 320 130 323L200 352 240 362Q260 380 258 410M0 1043H630L680 1072 870 1047 958 1102 990 1158M1535 1313 1458 1335 1295 1400H1275L1255 1440 1225 1473 1190 1490 1172 1528 1120 1568"/>
        <g class="casing"><path class="ln" id="yw3" d="M1535 957 1485 1005 1430 1045 1388 1053H1320L1250 1045H1190L1100 1075 960 1195 930 1290 910 1390 837 1505 760 1568"/></g>
        <use class="route" href="#yw3"/>
        <g class="casing"><path class="ln" id="or3" d="M0 479 82 508 117 550 129 600 124 1030 136 1100 127 1145 135 1180 177 1218 182 1300 178 1345 142 1490V1568"/></g>
        <use class="freeway" href="#or3"/>
      </svg>
      <!-- south west -->
      <svg x="-10" y="690" width="950" height="720" viewBox="0 0 1568 1568" preserveAspectRatio="none">
        <path class="hill" d="M17 0H142V83H59V192H142V330H110V303H69V330H17Z"/>
        <path class="shade" d="M17 20 60 30 90 80 60 150 17 100zM160 60 230 80 220 120 170 90zM80 270 140 260 180 340 130 320zM60 200 130 220 100 250z"/>
        <path class="wash" d="M1180 0H1280L1225 85H1137V60H1190ZM1175 190 1190 190 1165 330 1095 500V760L1060 780 1010 905 990 920 970 1000 955 1000 980 920 1010 790 1065 750 1080 690V500L1095 430 1150 340zM350 1298H433V1407H350ZM1470 990 1568 985V1070H1475z"/>
        <path class="sand" d="M305 185 320 165 340 160V187zM480 137h14l-3 22h-12zM1015 23h18v16h-18zM1090 125l8 30-10 10zM1008 258H1052V303H1008ZM905 195h14v20h-14zM970 270l20-12v25l-20 5zM753 610h30v22h-30zM665 572l15 13-10 14zM1032 567h18v42h-18zM990 538h22v15h-22zM142 655h24v14h-24zM272 650 287 642V665L272 675zM1178 338h38v25h-38zM1340 305h40v25h-40zM1187 705l28-15v30l-28 2zM1165 672l15-17 14 18zM1342 890h22v16h-22zM1280 120h17v18h-17zM1443 35h20v45h-20zM1340 358h22v16h-22zM258 500l10-8v28l-16 2zM393 1392h21v12h-21zM655 1442h25v25l-27-2zM610 1465l15-12-5 27zM1270 215l10-17 15 5v30z"/>
        <path class="pink" d="M988 420l14 12-12 12zM930 486h21v14h-21z"/>
        <path class="park" d="M807 988H889V962H957V997H933V1185H1137V1130H1220V1546H766V1072H807ZM809 670h18l-2 35h-15zM772 577l30 5v25h-20zM78 745l23-1v20l-20 3zM1142 825h18v40l-15-5zM992 775l10-25h20v30zM1110 440 1160 423V455H1110zM955 260l15-5v40l-12-15zM545 1400 575 1360 600 1357 620 1400 605 1440 580 1410 560 1440zM650 1430l15-5 15 15zM1157 535l10 12-2 25zM1178 540l15 15-13 22zM253 175l10-15 8 15-8 8zM895 95l25 20 25-20 5 60-30-15-28 10zM965 150l30-40 45-20 8 90-40-25zM925 300l40 50-20 10-25-5zM910 378l38-8-15 28z"/>
        <path class="shade" d="M1060 1400 1095 1370 1080 1490 1050 1546 1020 1520zM1155 1250 1175 1190 1190 1200 1165 1290zM985 1480 1030 1440 1060 1530 980 1546zM1200 1320 1240 1290 1220 1460 1190 1500zM800 1060 825 1075 800 1078zM720 1345 770 1340 730 1370zM1010 1200 1020 1175 1030 1205zM1270 1470 1285 1468 1275 1546zM870 1430 890 1440 870 1445zM1110 1480 1140 1500 1130 1546 1100 1530z"/>
        <path class="glow" d="M840 1150 860 1130 870 1150 845 1175zM870 1220 885 1215 880 1265zM1040 1280 1050 1290 1020 1400 975 1440 1000 1380zM840 1300 855 1290 860 1320zM900 1300 920 1290 910 1330zM1060 1450 1080 1480 1060 1500z"/>
        <path class="ln golf" d="M265 25 240 65 270 80 295 50 285 110 240 120M190 155 210 165 155 200 175 255 205 200M215 225 265 235 262 260 240 255M35 605 70 620 110 600 130 620 125 550 110 530 60 600ZM690 215 710 260 680 270 740 240M735 205H755L740 280 770 290M735 275 740 335M790 212 830 215 810 280M850 210 860 290 880 240M670 330 720 310V385L670 390ZM770 300 790 320 765 330M980 310 1020 400M980 360 1040 355 1010 400M1310 110 1360 100 1365 150 1345 175 1310 160ZM560 1440 575 1475 595 1445"/>
        <path class="air" d="M905 655 950 660 930 690 950 705V735L850 822 832 820 838 770Z"/>
        <path class="ln runway" d="M848 798 935 665M247 518 204 615M232 555 260 615M870 725 900 680 910 700"/>
        <path class="water" d="M926 940 955 945 968 925 972 945 950 963H926zM953 1005 995 1027 960 1028 975 1045 970 1070 950 1055 960 1035zM597 1265 630 1245 625 1275 610 1285zM562 1300 590 1283 580 1312zM1177 125 1205 110 1200 160 1185 190 1178 160zM1411 920 1432 920V940L1465 938V970L1430 975 1411 990ZM1245 235l12-25 15 25zM1243 265l15-15 22 18-22 15z"/>
        <path class="ln stream" d="M1215 0 1222 100 1180 190 1148 350 1090 460 1095 650 1068 765 1030 775 995 840 955 1000M17 1325 80 1310 160 1262 235 1246 290 1262H360L400 1212 440 1178 660 1003 700 998 745 985 820 992 870 975 920 995 950 1030 1000 1040 1050 1068 1100 1035 1150 1048 1230 1042 1280 1035 1340 1045 1365 1068 1430 1038 1480 1030 1568 990M1230 1042 1275 1110 1290 1190 1305 1220 1302 1250 1325 1320 1355 1380 1395 1415 1425 1398 1485 1420 1535 1418 1568 1455M17 1342 80 1330 130 1300 160 1262M1000 1040 1025 1065 1080 1050 1110 1078 1150 1083"/>
        <path class="ln street" d="M17 635V965M102 635V1185M185 965V1075M187 742V965M213 635V665L187 710V742M392 83V1165L357 1215 350 1293M473 0V1070M557 0V854M641 0V400M724 0V105L765 180 770 215 805 280V1038L785 1055 740 1170 698 1218 660 1222M888 635V270L902 245M970 0V85L950 130V250L970 310V410M1052 0V410M1135 0V230M972 640V854M1135 640V810L1145 860 1160 875 1200 855H1218M1218 305V1010L1195 1075 1145 1090H930L920 1015 880 1005 805 998M1300 85V355L1290 390 1300 410V965M1383 0V60M1383 640V965M1466 0V1075H1568M1549 0V860M392 83H960L1205 87 1568 77M320 192H830L865 205 902 247H972L990 240 1045 195 1210 198 1568 187M557 302 650 298M1052 305H925M1218 307 1568 297M392 413H1075L1130 437 1150 417 1568 408M392 523H885L1568 515M888 498 968 503M17 742H102M187 742H735L800 708H845M945 742 1150 748 1400 742 1568 730M17 854H600M1218 857H1466L1568 842M17 965H187M392 965H545M1145 967H1383M724 400V370L745 340 785 330H840L890 358 915 350 925 320V195M888 523V640L850 690 845 740 825 790 810 800H722M226 60 235 120 225 190 240 270 270 330V1185M235 125 260 135 310 190 320 192M290 1295H495L570 1243H632M268 1295V1515H437V1298M1140 870V1090M1250 0 1255 83"/>
        <path class="ln main" d="M17 635H905M1115 637H1500L1568 622M1035 665 850 830M17 1075H475L495 1050 585 905Q600 885 640 870L700 858M641 590V960L665 1035 673 1080 662 1180V1222L635 1243V1300L655 1360 648 1485 615 1525 612 1546M632 1243 600 1250"/>
        <g class="casing"><path class="ln" id="or4" d="M17 566 270 437 320 430 510 437 700 435 855 440 937 463 1170 466 1275 438 1568 431M680 0V125L638 410 640 580M1398 0 1402 120 1422 190V300L1400 370 1397 430"/></g>
        <use class="freeway" href="#or4"/>
      </svg>
      <!-- south centre -->
      <svg x="920" y="690" width="950" height="720" viewBox="0 0 1568 1568" preserveAspectRatio="none">
        <path class="hill" d="M365 1485 400 1440 440 1430 480 1380 520 1370 600 1300 650 1270 720 1270 760 1230 900 1230 920 1200 1000 1170 1085 1130 1190 1090 1280 1120 1285 1180 1240 1230 1170 1240V1350H1087V1487H1005V1515H860L760 1546H427V1515L380 1510ZM1262 0H1400L1420 40 1380 100 1340 80 1280 40z"/>
        <path class="wash" d="M0 980 90 920 200 890 330 840 350 850 450 825 520 835 640 830 690 815 720 820 660 850 480 845 350 870 200 930 50 1050H0zM1450 750H1510V780H1450z"/>
        <path class="shade" d="M450 1500 540 1450 600 1440 700 1440 780 1410 900 1400 860 1460 760 1450 700 1520 600 1540 520 1510zM640 1350 700 1310 780 1290 850 1310 790 1370 700 1390zM880 1250 950 1230 1010 1260 930 1310zM1000 1350 1080 1260 1160 1250 1060 1330zM380 1350 440 1320 420 1340zM490 1400 560 1380 530 1440zM760 1515H860V1546H760zM1300 20 1350 10 1400 60 1350 70z"/>
        <path class="glow" d="M500 1390 580 1340 560 1410zM590 1370 660 1300 650 1360 610 1400zM900 1330 980 1300 950 1370zM1090 1200 1170 1150 1150 1210zM700 1400 780 1380 740 1420z"/>
        <path class="sand" d="M722 1240h30v30h-30zM1450 735H1500L1505 790H1450zM280 788h18v30h-18zM35 785h15v18h-15zM500 375h20v28h-20zM1182 1458h27v26h-27zM1518 1325h20v20h-20zM1455 865l20-10v20l-18 8zM595 465h35v50h-35zM1155 15h20v60h-20zM270 1090h18v30l-10 10zM470 215l20 5v18h-20zM1490 655h25v28h-25zM1220 995l18-8v15l-16 5zM1440 310h18v22h-18zM1203 920h17v35h-17zM40 290h12v25h-12zM1335 5h20v20h-20z"/>
        <path class="pink" d="M1013 460h29v18h-29z"/>
        <path class="park" d="M677 295H720V310L750 305V360L730 370 715 330 700 345 680 330zM852 240h32v45h-32zM805 737 870 740 950 770 1050 770 1100 740 1180 700 1230 660 1280 630 1370 635V645L1290 650 1240 670 1180 710 1120 760 1060 780H950L870 752 805 745zM1320 450 1340 430 1390 420 1395 400 1440 450 1450 480 1430 510 1430 540 1440 560 1470 590 1500 620 1430 610 1405 580 1395 520 1320 515zM470 1078h40v105h-52v-30l12-10zM405 348h20v28h-20zM265 970h40v75l-38 28zM1010 1010 1060 1005 1095 1015V1060L1030 1050zM1095 1020 1175 1018 1130 1060H1095zM1102 908h40l-25 24-15-5zM1265 850l15-3 20 45-5 12-35-2zM1355 230l20-15 10 50-10 28-28-15zM1430 1072 1440 1080 1470 1170 1460 1175 1430 1110zM1430 1200 1485 1190 1490 1220 1475 1230 1480 1285 1450 1280 1460 1250 1430 1230zM1378 1355l25-10-10 35-18 6zM535 908h20v27h-20zM591 1102h20v22h-20zM767 855h14v20h-14zM182 320h50v28h-50zM1255 1455l25 10v30l-20-10zM1493 960h13v22zM1030 0h60l-10 40-30 20-20-30zM195 130h35v50h-35zM30 0h15l48 60zM1220 545l30 5v35l-30 5z"/>
        <path class="ln golf" d="M275 975H300V1040L270 1065ZM110 1035 145 1025 175 1035M110 1035 120 1045M1205 1310 1195 1370 1235 1415 1240 1330 1210 1340 1225 1390M1440 260 1430 300 1450 350 1440 395M1258 330 1255 400M1150 1565 1170 1520"/>
        <path class="air" d="M1303 352H1385V402H1303ZM1010 580H1210V650L1150 700 1130 730 1080 740 1010 700Z"/>
        <path class="ln runway" d="M1010 590H1205M1010 608H1205M1040 660H1200M1030 580 1035 615M1060 585V610M1100 580V610M1150 590V612M1010 680 1080 740M540 1283H587"/>
        <path class="water" d="M58 885 70 868 90 870V920L75 933 57 925zM230 885 270 880 275 868H300V900L235 898zM270 910 300 908 285 932zM362 940 375 925 387 940V957L365 955zM25 970 55 965V985L35 990zM402 808 415 800 425 820 403 822zM463 800 475 792 484 798V820L465 822zM555 800 595 795 600 775 625 775 600 820 580 832H553zM1395 640 1470 645 1510 660 1568 640V665L1540 675 1480 655 1400 655zM1095 750 1125 735 1105 765zM485 1085 505 1080V1100L490 1112zM1518 1080h45v15h-10v15h-25zM105 935 155 917V930L110 940z"/>
        <path class="ln stream" d="M0 1010 90 950 180 920 230 885 330 860 350 870 370 845 470 840 550 830 640 832 690 820 720 790 790 738 870 750 950 775H1040L1180 712 1290 635 1360 630 1450 640M0 1420 60 1480 100 1500 135 1546"/>
        <path class="ln street" d="M15 0V350M97 0V500M180 0V860M262 0V420M430 0V850M511 0V700M511 760V1350M590 700V1070M672 735V1185M720 300V735M757 0V490M803 870V1180M843 240V1180M922 850V1185M1005 0V150M1095 850V1060M1135 30V370M1175 75V300M1175 860V1065M1218 0V600L1230 620M1255 860V1110L1285 1120M1340 730V1000L1335 1546M1422 240V410L1400 420 1390 480 1370 515V545M1422 1065V1510M1510 0V1000L1495 1065M1510 1060V1546M0 75H260L400 70M840 238H1100M0 183H430M840 183H1280L1350 230H1422M0 295H600M750 295H1568M0 407H1240M0 513H1568M0 623H640M0 735H675M0 845 200 843 270 840 335 815M100 965H700L1005 960H1568M0 1075H344L1568 1065M230 1185H922M1280 1175H1510M1240 1290H1568M1340 1400H1568M250 1295H344M310 1405H344M100 965V1075M280 1546M265 1080 275 1110 262 1140 255 1230M1195 1330 1180 1350 1200 1400 1230 1425H1270M1250 1430V1546M1260 710H1568M1340 650 1320 590 1260 560 1220 550M1568 500 1430 545 1370 545M1230 735 1240 670M1305 680 1310 670 1370 680 1400 672 1450 675M1285 1100 1320 1130 1280 1180"/>
        <path class="ln main" d="M344 0V1546M1050 72H1260L1325 130H1568M1422 690 1440 710 1445 780 1460 793H1568M0 625H640M985 540H1280L1350 560 1400 610 1430 622 1480 600H1568M1055 622 1190 635M1568 508 1500 520M600 290 690 430M350 880H430L475 853H1568M0 407H590M1110 790 1150 740H1280L1340 738H1568M1090 1546 1140 1540 1170 1510H1568"/>
        <path class="ln route" d="M593 265V292H612V320"/>
        <g class="casing"><path class="ln" id="yw5" d="M375 0 568 260"/></g>
        <use class="route" href="#yw5"/>
        <g class="casing"><path class="ln" id="or5" d="M0 430 200 428 300 427 460 434 530 430 610 434 1065 433 1130 456 1220 463 1290 485 1303 510 1308 590Q1310 605 1330 612L1380 625 1470 636 1510 631H1568M613 0 612 320 622 385 638 440 636 655 662 686 740 680 800 686H870L930 695 1000 698 1040 715 1095 800 1120 822H1265L1300 850 1312 905 1308 990 1310 1070M1308 990 1375 1013H1568M1306 1130 1290 1320V1546M943 0V210L970 295 975 430V690M1242 405 1240 470 1258 640 1260 830M1195 637 1330 605M265 465 255 700 236 780 233 970 245 1120 235 1210M245 1300 262 1335 403 1546M1028 618H1042"/></g>
        <use class="freeway" href="#or5"/>
      </svg>
      <!-- south east -->
      <svg x="1860" y="690" width="960" height="720" viewBox="0 0 1568 1568" preserveAspectRatio="none">
        <path class="hill" d="M1355 185 1430 180H1478V403H1535V572H1520V520H1395V400H1355Z"/>
        <path class="shade" d="M1180 0H1210L1240 60 1220 100 1170 40zM1240 140 1260 80 1310 60 1330 30 1360 80 1300 120 1345 150 1340 290H1290L1300 200 1235 170zM1360 30 1400 40 1410 120 1370 180zM1440 100 1480 80 1520 110 1500 160 1440 190zM1390 565H1430V590zM1480 10 1520 20 1500 60z"/>
        <path class="sand" d="M150 17h36v53h-36zM371 72h41v25h-41zM82 5h20v12h-20zM70 223h22v15h-22zM80 348h22v15h-22zM740 420l8-5 12 40-20-3zM1115 458h30l-5 50h-25zM676 578h18v38h-18zM473 650h20v20h-20zM645 677h20v32h-20zM310 683h30v45l-15 5-15-8zM230 797h37v22h-37zM70 875l20-13-5 20-13 3zM738 869h20v28h-20zM573 912h22v38h-22zM42 908h20v25h-20zM206 960h40v43h-40zM213 1060l10-18 8 8v15zM628 1126h16v20h-16zM215 1180h42v24h-42zM222 1240l23-3-6 18zM855 1265h18v36h-20zM707 1285h21v53h-21zM572 1315l25-5-5 20-20 8zM413 1332h27v38h-27zM300 1464h20v14h-20zM198 1450h20v28h-20zM910 1410h20v60h-20zM1370 1462h22v33h-22zM1440 650h18v28h-18zM1446 1118h16v40h-16zM1003 565h13v30h-13zM850 1068l18-5-10 25h-10z"/>
        <path class="pink" d="M178 960h24v43h-24zM900 1015h12v18h-12zM1440 968l25-12 8 15-25 12z"/>
        <path class="park" d="M42 0H53V110H42ZM22 160h12v110h-12zM0 300H25L10 420 28 520 10 600 0 590zM320 570H353V620L365 625H330L320 610zM820 513l25 5 4 22h-25zM133 675 165 652 205 655 207 678zM475 595 473 560 492 542zM545 535l15-18-3 30zM955 370 990 345 1020 375 1015 385 960 398H948zM1030 372h20v23h-20zM834 318h20l-5 27-14-3zM955 545 970 525 1000 545V587H985L975 560 958 587zM1147 530l22 8-8 15zM1355 490 1380 475 1382 510 1355 512zM1380 210 1400 195 1412 235 1380 225zM1403 330 1415 303 1428 325 1415 348zM410 680 447 678 412 700zM697 660h22v15h-20zM822 708l52-15 28 12zM80 940 90 912 112 910 110 925zM310 880h18v22l-8 5 8 22h-18l5-22zM573 846h12v28h-12zM722 950l12-25 8 25zM492 818h20l-12 25zM831 882l15-2 10 18-12 0zM882 882h24v10h-24zM490 990l25 8-15 2h-10zM572 998l18-12v12zM712 985l25-3v15l-22 3zM307 988h20v12h-20zM182 1090 250 1103 235 1125 250 1150 215 1125 185 1105zM400 1100 415 1085 440 1100V1150L420 1165 402 1170zM402 1170 430 1175 440 1228 422 1225 415 1200 402 1200zM445 1215 490 1215 485 1240 470 1245 465 1230zM687 1215l40-12v25h-40zM770 1225 805 1190V1230zM850 1175H887V1225L880 1275H890V1230L850 1218zM230 1340l20-15 5 20zM385 1450l20-50v53zM730 1395 750 1400 768 1430 755 1498H730zM808 1455 840 1405 843 1475zM855 1370 885 1345 888 1370 870 1380zM860 1425l20-12 8 22-20 5zM770 1546 775 1505 795 1503 785 1546zM1405 1443l32 25-2 28zM1508 1090 1535 1070V1142L1525 1115zM1435 870l20 10-5 30-10 8zM1110 1546l20-48 3 48zM118 1215h25l-8 18h-18zM197 1215h17v18h-17z"/>
        <path class="ln golf" d="M1035 245 1060 225 1095 240M1040 205 1080 200 1090 240M1050 210 1035 240 1060 280 1085 270M1140 235 1200 230 1212 280 1180 330 1150 300ZM1140 310 1133 350M955 410 950 470 975 490M1040 410 1065 430 1035 490 1065 500M1460 940 1480 950M1490 930 1505 900 1500 920"/>
        <path class="air" d="M865 403H942V500L868 508ZM1140 1498 1270 1510 1275 1546H1145z"/>
        <path class="ln runway" d="M870 420 930 480M875 460 940 440M880 495 935 410M1160 1520 1230 1546M1180 1546 1240 1520"/>
        <path class="water" d="M624 195 675 190 748 217V230L624 222ZM812 230 850 205 857 220 835 250 812 257zM1075 13 1110 25 1140 15 1145 0 1130 35 1075 37zM252 530 262 507 270 520 282 522 260 550 240 585 225 585zM137 598 160 578V590L148 600zM133 630 165 628 150 640zM0 640H35L30 655 0 663zM378 415 405 400 400 415 388 425zM778 1078H822V1110H812L800 1090 795 1145 782 1140zM127 1113l10 10 10-5v20l-20 15v-30zM0 1078l15 2v30H0zM455 1300l15 2-5 40-12-5zM462 1370l20-15 22 15-15 15 20 32-50 5 15-25z"/>
        <path class="ln canal" d="M1048 0 1065 40 1100 75 1110 105 1130 150 1115 190V350L1155 500 1225 590M1140 400 1170 470M1435 770 1448 832 1475 840 1535 910M150 1120V1145L178 1135"/>
        <path class="ln stream" d="M1070 18 1030 40 1010 70 985 90 935 137M915 143 870 187 850 190 788 245M705 265 665 270 640 262 555 235 510 248 435 350 430 370 405 395 370 430 350 490 270 515 210 605 190 620 150 608 105 628M905 380 900 410"/>
        <path class="ln street" d="M40 0V600M122 0V180M205 680V1000L185 1085 180 1120 195 1165V1546M288 404V960L278 1060V1546M450 515V1000L440 1060 445 1140V1546M535 515V960L527 1060V1546M617 115V395M697 400V1020L685 1115V1546M780 290V1065L770 1546M862 300V1000L850 1055V1460L830 1500M945 270V590M1028 290V590M205 683 230 620M617 515V1020L608 1100V1546M0 73H187M0 128H122M0 183H122M0 295H150M0 404H350M660 395 1315 403 1355 432M0 515H205L290 480 345 513 780 510 1100 513H1430L1435 590M370 635 495 632 530 622 908 623M0 683 368 680M0 737H1535M0 848H1535M0 957H908M0 1067H365L540 1060H830L1535 1065M0 1180H400L420 1168 440 1177 908 1170H1500M0 1290 908 1282H1535M0 1397H440L475 1383 510 1393 1200 1390M0 1507 830 1503H1120L1160 1460H1200L1225 1485 1335 1487M1335 1498H1535M1518 520V1020L1503 1060V1498M945 270 965 275 975 288 1110 291M617 395 605 445 617 470V515M640 390 697 397M900 1460V1546M1015 1390V1450M1340 1390V1546M1435 590V1030M40 600V960L30 1120V1546M1355 430 1340 515 1355 590M1125 1495 1135 1546"/>
        <path class="ln main" d="M0 792 908 788H1535M368 486V1020L358 1100 360 1546M1178 0 1110 50V590M1422 0 1428 185 1360 440 1343 530 1355 590M1095 1390V1546M858 1500 835 1546"/>
        <g class="casing"><path class="ln" id="yw6" d="M820 0 780 35 738 65 615 112 580 132 500 220 355 385 352 415 370 486"/></g>
        <use class="route" href="#yw6"/>
        <g class="casing"><path class="ln" id="or6" d="M142 0V230L131 295 140 365 127 640 125 1000 110 1240 115 1350 112 1546M0 631H90L150 649 228 618 268 570 293 556 335 510 370 486 425 453 440 418 455 405 612 409 635 398 665 335 705 290M788 283 805 291 825 293 948 286 1018 330H1085L1110 350 1155 472 1205 547 1240 590M1290 1388Q1265 1430 1225 1441L1190 1448H1010L900 1452Q850 1470 848 1546M0 1013H250L908 1007H1535M1290 1473 1307 1500 1355 1546"/></g>
        <use class="freeway" href="#or6"/>
      </svg>

      <defs>
        <g id="interstate">
          <path d="M-15-19Q-11-14-6-18Q-3-19 0-21Q3-19 6-18Q11-14 15-19Q20-9 19 1Q17 13 0 20Q-17 13-19 1Q-20-9-15-19z" fill="#fff"/>
          <path d="M-14-17Q-11-13-6-15.500Q-3-16-0-18.500Q3-16 6-15.500Q11-13 14-17L17-9H-17z" fill="#c8282d"/>
          <path d="M-17.500-7H17.500Q20 10 0 18Q-20 10-17.500-7z" fill="#3d4fa8"/>
        </g>
        <path id="plane" d="M0-12Q2.500-12 2.500-8V-3L12 3V6L2.500 3.500V8L6 11V13L0 11.500-6 13V11L-2.500 8V3.500L-12 6V3L-2.500-3V-8Q-2.500-12 0-12z"/>
      </defs>

      <g class="shields">
        <use href="#interstate" x="1294" y="114"/><text x="1294" y="116">17</text>
        <use href="#interstate" x="177" y="885"/><text x="177" y="887">10</text>
        <use href="#interstate" x="84" y="916"/><text x="84" y="918">10</text>
        <use href="#interstate" x="1047" y="885"/><text x="1047" y="887">10</text>
        <use href="#interstate" x="1288" y="887"/><text x="1288" y="889">10</text>
        <use href="#interstate" x="1611" y="1065"/><text x="1611" y="1067">10</text>
        <use href="#interstate" x="1714" y="1199"/><text x="1714" y="1201">10</text>
      </g>
      <g class="badges">
        <ellipse cx="1055" cy="169" rx="25" ry="19"/><text x="1055" y="169">101</text>
        <ellipse cx="1936" cy="347" rx="25" ry="19"/><text x="1936" y="347">101</text>
        <ellipse cx="2623" cy="469" rx="19" ry="19"/><text x="2623" y="469">87</text>
        <ellipse cx="2317" cy="816" rx="25" ry="19"/><text x="2317" y="816">202</text>
        <ellipse cx="1063" cy="1266" rx="25" ry="19"/><text x="1063" y="1266">202</text>
        <rect x="195" y="1170" width="74" height="26" rx="5"/><text x="232" y="1183">MC 85</text>
      </g>
      <g class="airports">
        <use href="#plane" x="86" y="8"/><use href="#plane" x="535" y="633"/><text x="535" y="664">LUF</text>
        <use href="#plane" x="1588" y="985"/><text x="1588" y="1016">PHX</text>
      </g>
      <g class="places">
        <text class="town" x="550" y="306">Surprise</text>
        <text class="town" x="603" y="982">Avondale</text>
        <text class="town" x="476" y="1081">Goodyear</text>
        <text class="town" x="2443" y="367">Fountain Hills</text>
        <text class="village" x="2567" y="279">Fort McDowell</text>
        <text class="village" x="2461" y="899">Apache Wells</text>
        <text class="city" x="930" y="476">Peoria</text>
        <text class="city" x="1079" y="622">Glendale</text>
        <text class="city" x="1836" y="777">Scottsdale</text>
        <text class="city" x="1796" y="1016">Tempe</text>
        <text class="city large" x="2112" y="1053">Mesa</text>
        <text class="city" x="2234" y="1270">Gilbert</text>
        <text class="capital" x="1405" y="937">Phoenix</text>
      </g>

      <g class="clusters">
        <g class="low"><circle cx="1102" cy="-17"/></g>
        <g class="low"><circle cx="1110" cy="62"/><text x="1110" y="63">5</text></g>
        <g class="low"><circle cx="1080" cy="178"/><text x="1080" y="179">7</text></g>
        <g class="high"><circle cx="1426" cy="272"/><text x="1426" y="273">49</text></g>
        <g class="mid"><circle cx="1348" cy="274"/><text x="1348" y="275">27</text></g>
        <g class="high"><circle cx="1328" cy="214"/><text x="1328" y="215">54</text></g>
        <g class="mid"><circle cx="1238" cy="294"/><text x="1238" y="295">22</text></g>
        <g class="mid"><circle cx="1470" cy="166"/><text x="1470" y="167">10</text></g>
        <g class="mid"><circle cx="1608" cy="170"/><text x="1608" y="171">10</text></g>
        <g class="mid"><circle cx="1782" cy="193"/><text x="1782" y="194">18</text></g>
        <g class="high"><circle cx="1564" cy="318"/><text x="1564" y="319">32</text></g>
        <g class="low"><circle cx="1742" cy="310"/><text x="1742" y="311">8</text></g>
        <g class="low"><circle cx="1106" cy="334"/><text x="1106" y="335">6</text></g>
        <g class="low"><circle cx="1118" cy="420"/><text x="1118" y="421">3</text></g>
        <g class="mid"><circle cx="1328" cy="416"/><text x="1328" y="417">29</text></g>
        <g class="high"><circle cx="1432" cy="496"/><text x="1431" y="497">31</text></g>
        <g class="low"><circle cx="1586" cy="464"/><text x="1586" y="465">9</text></g>
        <g class="high"><circle cx="1294" cy="558"/><text x="1294" y="559">34</text></g>
        <g class="high"><circle cx="1234" cy="560"/><text x="1234" y="561">46</text></g>
        <g class="low"><circle cx="680" cy="650"/><text x="680" y="651">4</text></g>
        <g class="mid"><circle cx="880" cy="792"/><text x="880" y="793">24</text></g>
        <g class="mid"><circle cx="866" cy="930"/><text x="866" y="931">16</text></g>
        <g class="mid"><circle cx="1116" cy="754"/><text x="1116" y="755">12</text></g>
        <g class="high"><circle cx="998" cy="784"/><text x="998" y="785">33</text></g>
        <g class="high"><circle cx="1278" cy="728"/><text x="1278" y="729">34</text></g>
        <g class="mid"><circle cx="1202" cy="714"/><text x="1202" y="715">21</text></g>
        <g class="high"><circle cx="1508" cy="720"/><text x="1508" y="721">41</text></g>
        <g class="mid"><circle cx="1414" cy="728"/><text x="1414" y="729">21</text></g>
        <g class="mid"><circle cx="1378" cy="780"/><text x="1378" y="781">27</text></g>
        <g class="mid"><circle cx="1458" cy="738"/><text x="1458" y="739">16</text></g>
        <g class="high"><circle cx="1326" cy="712"/><text x="1326" y="713">43</text></g>
        <g class="high"><circle cx="1084" cy="858"/><text x="1084" y="859">41</text></g>
        <g class="high"><circle cx="1226" cy="940"/><text x="1226" y="941">34</text></g>
        <g class="high"><circle cx="1016" cy="984"/><text x="1016" y="985">45</text></g>
        <g class="mid"><circle cx="1405" cy="936"/></g>
        <g class="mid"><circle cx="1366" cy="946"/><text x="1366" y="947">10</text></g>
        <g class="mid"><circle cx="1388" cy="938"/><text x="1388" y="939">13</text></g>
        <g class="mid"><circle cx="1484" cy="880"/><text x="1484" y="881">19</text></g>
        <g class="mid"><circle cx="1472" cy="980"/><text x="1472" y="981">20</text></g>
        <g class="mid"><circle cx="1630" cy="822"/><text x="1630" y="823">26</text></g>
        <g class="high"><circle cx="1608" cy="872"/><text x="1608" y="873">33</text></g>
        <g class="low"><circle cx="1836" cy="776"/><text x="1836" y="777">3</text></g>
        <g class="high"><circle cx="1332" cy="1142"/><text x="1332" y="1143">34</text></g>
        <g class="high"><circle cx="1524" cy="1114"/><text x="1524" y="1115">37</text></g>
        <g class="high"><circle cx="1434" cy="1160"/><text x="1434" y="1161">37</text></g>
        <g class="mid"><circle cx="1174" cy="1238"/><text x="1174" y="1239">21</text></g>
        <g class="mid"><circle cx="1690" cy="1292"/><text x="1690" y="1293">23</text></g>
      </g>
    </svg>

    <div class="map-controls">
      <button type="button" aria-label="Zoom in"><svg viewBox="0 0 56 56"><path d="M28 19v18M19 28h18" stroke="#333" stroke-width="5" stroke-linecap="round"/></svg></button>
      <button type="button" aria-label="Zoom out"><svg viewBox="0 0 56 56"><path d="M19 28h18" stroke="#333" stroke-width="5" stroke-linecap="round"/></svg></button>
      <button type="button" aria-label="Reset bearing to north"><svg viewBox="0 0 56 56"><path d="M20 27 28 12 36 27z" fill="#333"/><path d="M20 31 28 46 36 31z" fill="#ccc"/></svg></button>
    </div>

    <ul class="legend">
      <li class="step-1">1 - 10</li>
      <li class="step-2">10 - 30</li>
      <li class="step-3">30 - 60</li>
      <li class="step-4">60 - 100</li>
      <li class="step-5">100 - 200</li>
      <li class="step-6">200 - 400</li>
    </ul>
  </section>
</main>

<footer class="site-footer">
  <svg class="sprite" aria-hidden="true"><symbol id="github" viewBox="0 0 16 16"><path d="M8 0C3.580 0 0 3.580 0 8c0 3.540 2.290 6.530 5.470 7.590.4.070.55-.17.55-.38 0-.19-.01-.82-.01-1.490-2.010.37-2.530-.49-2.690-.94-.09-.23-.48-.94-.82-1.130-.28-.15-.68-.52-.01-.53.63-.01 1.080.58 1.230.82.72 1.210 1.870.87 2.330.66.07-.52.28-.87.51-1.070-1.780-.2-3.640-.89-3.640-3.950 0-.87.31-1.590.82-2.150-.08-.2-.36-1.020.08-2.120 0 0 .67-.21 2.200.82.64-.18 1.320-.27 2-.27s1.360.09 2 .27c1.530-1.040 2.200-.82 2.200-.82.44 1.100.16 1.920.08 2.120.51.56.82 1.270.82 2.150 0 3.070-1.870 3.750-3.650 3.950.29.25.54.73.54 1.480 0 1.070-.01 1.930-.01 2.200 0 .21.15.46.55.38A8.010 8.010 0 0 0 16 8c0-4.420-3.580-8-8-8z" fill="currentColor"/></symbol></svg>
  <p class="made-by">Made by:</p>
  <ul class="authors">
    <li><a href="#"><svg class="github"><use href="#github"/></svg>Radha Ramadoss</a></li>
    <li><a href="#"><svg class="github"><use href="#github"/></svg>Paula Moyano</a></li>
    <li><a href="#"><svg class="github"><use href="#github"/></svg>Shirley Ramos</a></li>
  </ul>
</footer>
</body>
</html>
```
FILE: styles.css
```css
*, *::before, *::after { box-sizing: border-box; }

body {
  margin: 0;
  min-height: 100vh;
  display: flex;
  flex-direction: column;
  font-family: Roboto, "Liberation Sans", sans-serif;
  font-size: 26px;
  background: #202937;
}

ul, p, h1 { margin: 0; padding: 0; list-style: none; }

input, select, button { font: inherit; }

/* Header */
.site-header {
  height: 185px;
  display: flex;
  justify-content: center;
  align-items: center;
  background: #202937;
}

.logo {
  display: flex;
  align-items: center;
  color: #ef4444;
  font-size: 102px;
  line-height: 92px;
  font-weight: 900;
  -webkit-text-stroke: 4px #ef4444;
}

.logo-mark { width: 93px; height: 93px; }

/* Page body */
.content {
  position: relative;
  display: flex;
  flex-direction: column;
  align-items: center;
  padding: 423px 0 555px;
  background: #d8d6d3;
  overflow: hidden;
}

.backdrop {
  position: absolute;
  inset: 0;
  width: 100%;
  height: 100%;
}

.ln { vector-effect: non-scaling-stroke; fill: none; stroke-linejoin: round; }
.avenue { stroke: #cfcdca; stroke-width: 21px; }
.lane { stroke: #d0cecb; stroke-width: 8px; }

/* Search form */
.search-card {
  position: relative;
  width: 58.6%;
  display: flex;
  flex-direction: column;
  padding: 172px 92px 127px;
  background: #174f63;
  box-shadow: 0 8px 72px rgba(224, 196, 168, 0.3);
}

.mode-row {
  display: flex;
  justify-content: center;
  padding-bottom: 38px;
}

.mode {
  display: flex;
  align-items: center;
  gap: 8px;
  height: 40px;
  margin-right: 78px;
  color: #d1d5db;
}

.mode input {
  width: 25px;
  height: 25px;
  margin: 0 0 8px;
}

.field-group {
  display: flex;
  flex-direction: column;
  gap: 38px;
  padding: 38px 0 46px;
  border-top: 2px solid #9ca3af;
  border-bottom: 2px solid #9ca3af;
}

.field {
  width: 100%;
  height: 77px;
  padding: 0 16px;
  border: 2px solid #3e4757;
  border-radius: 0;
  background: #175e76;
  color: #d1d5db;
  appearance: none;
}

.field::placeholder { color: #6b7280; opacity: 1; }

select.field { font-size: 25px; }

.date-row {
  display: flex;
  justify-content: center;
  align-items: center;
  gap: 79px;
  padding: 46px 0;
  color: #e5e7eb;
}

.date {
  width: 256px;
  height: 58px;
  padding: 0 28px 0 24px;
  border: 0;
  background: #175e76;
  color: #9ca3af;
  color-scheme: dark;
}

.date::-webkit-calendar-picker-indicator {
  width: 24px;
  height: 24px;
  padding: 0;
  margin: 0;
}

.search-button {
  height: 77px;
  border: 0;
  background: #dc2626;
  color: #e5e7eb;
}

/* Map */
.map {
  position: relative;
  width: 83.333%;
  margin-top: 239px;
  background: #efe9e1;
}

.map-art { display: block; width: 100%; height: auto; }

.hill { fill: #d1e7be; }
.park { fill: #b6e79d; }
.shade { fill: #968c64; fill-opacity: 0.15; }
.glow { fill: #f4fbe8; fill-opacity: 0.35; }
.wash { fill: #ebedcc; }
.sand { fill: #e6dfb8; }
.pink { fill: #ead2da; }
.air { fill: #d5d7e1; }
.water { fill: #75cff0; }
.golf { stroke: #b6e79d; stroke-width: 5px; }
.runway { stroke: #c6c9de; stroke-width: 5px; }
.stream { stroke: #a5d5ef; stroke-width: 1px; }
.canal { stroke: #75cff0; stroke-width: 2px; }
.street { stroke: #fff; stroke-width: 2px; }
.main { stroke: #fff; stroke-width: 4px; }
.casing { stroke: #fff; stroke-width: 7px; }
.route { stroke: #f2d263; stroke-width: 4px; }
.freeway { stroke: #ffa05a; stroke-width: 4px; }

.map-art text {
  text-anchor: middle;
  dominant-baseline: central;
}

.shields text { fill: #fff; font-size: 18px; font-weight: 700; }
.badges ellipse, .badges rect { fill: #fff; stroke: #222; stroke-width: 2px; }
.badges text { fill: #222; font-size: 18px; font-weight: 700; }
.airports { fill: #4558c8; }
.airports use, .airports text { stroke: #fff; stroke-width: 2px; paint-order: stroke; }
.airports text { fill: #4a5cb5; font-size: 23px; }
.places { stroke: #fff; stroke-width: 4px; stroke-linejoin: round; }
.places text { paint-order: stroke; }
.village { font-size: 25px; fill: #222; }
.town { font-size: 30px; fill: #111; }
.city { font-size: 33px; font-weight: 500; }
.city.large { font-size: 36px; }
.capital { font-size: 40px; font-weight: 500; }

.clusters text { font-family: "Liberation Sans", Arial, sans-serif; font-size: 23px; }
.low circle { r: 44px; fill: #ffe01a; fill-opacity: 0.85; }
.mid circle { r: 55px; fill: #ff8e33; fill-opacity: 0.8; }
.high circle { r: 65px; fill: #660; fill-opacity: 0.8; }

.map-controls {
  position: absolute;
  top: 19px;
  left: 19px;
  display: flex;
  flex-direction: column;
  width: 56px;
  border-radius: 8px;
  background: #fff;
  box-shadow: 0 0 0 4px rgba(0, 0, 0, 0.1);
}

.map-controls button {
  height: 56px;
  padding: 0;
  border: 0;
  background: none;
}

.map-controls button + button { border-top: 2px solid #ddd; }
.map-controls svg { display: block; width: 56px; height: 54px; }

.legend {
  position: absolute;
  right: 62px;
  bottom: 69px;
  width: 308px;
  padding: 15px;
  background: #fff;
  box-shadow: 0 6px 14px rgba(0, 0, 0, 0.15);
  line-height: 54px;
  text-align: right;
}

.legend li { padding-right: 12px; }
.step-1 { background: #ffe454; }
.step-2 { background: #ffa561; }
.step-3 { background: #858540; }
.step-4 { background: #ad8540; }
.step-5 { background: #d75f40; }
.step-6 { background: #ff4d5f; }

/* Footer */
.site-footer {
  flex: 1;
  display: flex;
  flex-direction: column;
  align-items: center;
  gap: 23px;
  padding: 156px 0 200px;
  background: #202937;
  font-family: Inter, "Liberation Sans", sans-serif;
  line-height: 32px;
}

.sprite { position: absolute; width: 0; height: 0; }
.made-by { color: #9ca3af; }
.authors { display: flex; gap: 62px; }

.authors a {
  display: flex;
  align-items: center;
  gap: 16px;
  color: #fff;
  text-decoration: none;
}

.github { width: 45px; height: 45px; color: #9ca3af; }
```
